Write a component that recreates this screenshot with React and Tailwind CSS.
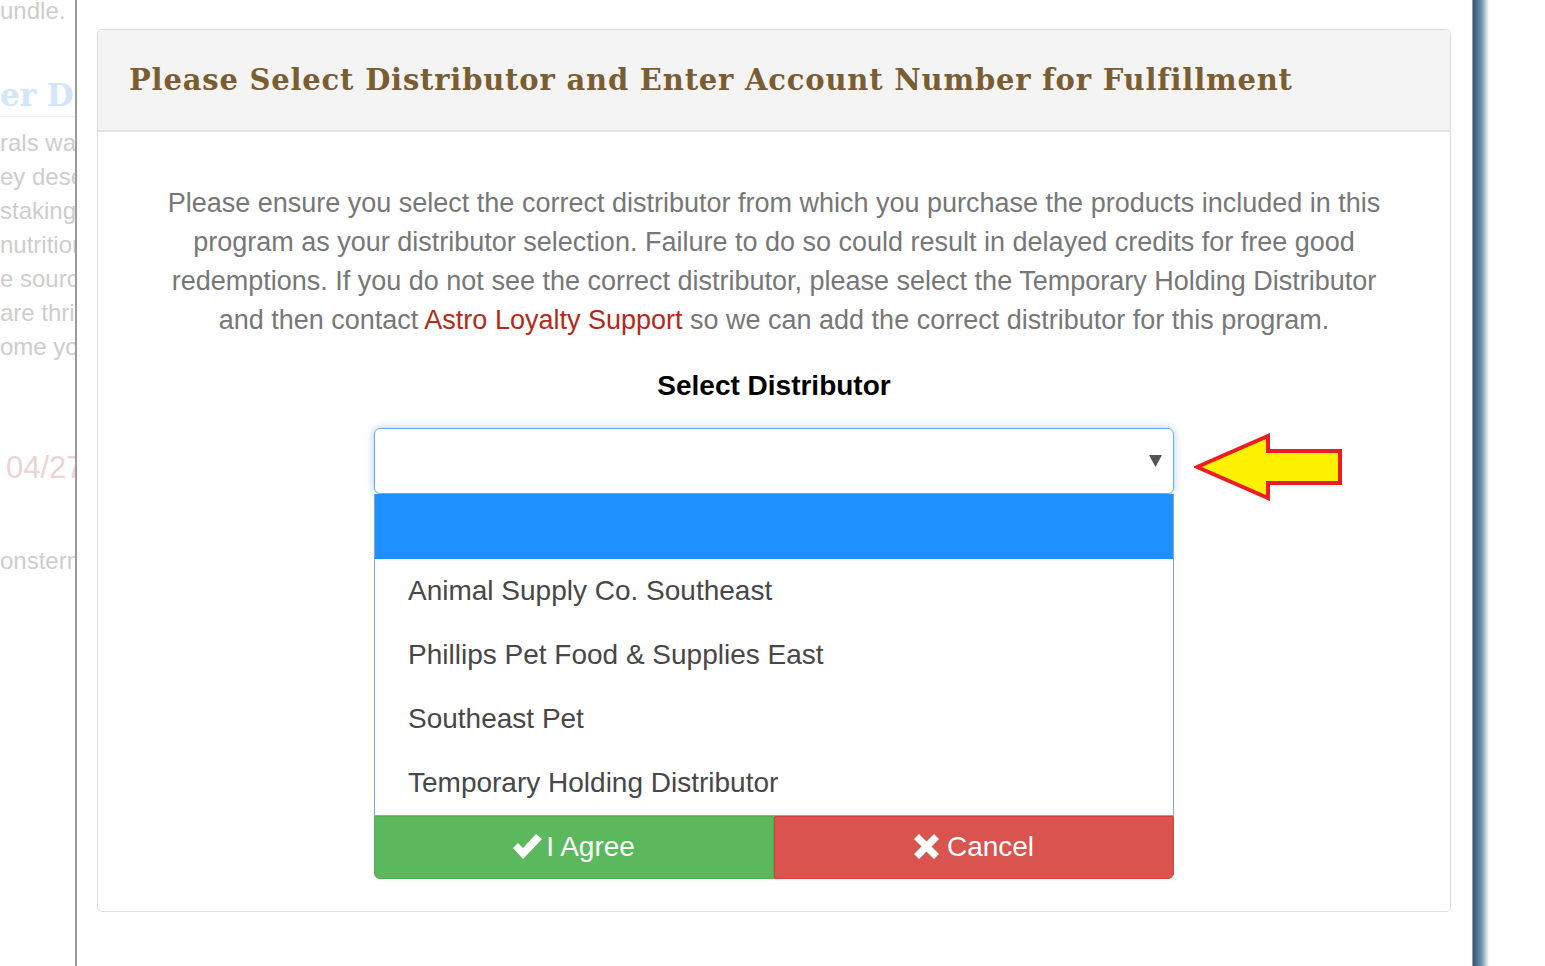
import React from "react";

const options = [
  "Animal Supply Co. Southeast",
  "Phillips Pet Food & Supplies East",
  "Southeast Pet",
  "Temporary Holding Distributor",
];

const bgLines = ["rals wa", "ey dese", "staking", "nutrition", "e sourc", "are thri", "ome yo"];

const CheckIcon = () => (
  <svg width="29" height="25" viewBox="0 0 29 25" className="mr-1">
    <path d="M0 14 L5 9 L10 14 L23 0 L29 5 L10 25 Z" fill="#fff" />
  </svg>
);

const RemoveIcon = () => (
  <svg width="25" height="25" viewBox="0 0 25 25" className="mr-2">
    <path
      d="M0 5 L5 0 L12.5 7.5 L20 0 L25 5 L17.5 12.5 L25 20 L20 25 L12.5 17.5 L5 25 L0 20 L7.5 12.5 Z"
      fill="#fff"
    />
  </svg>
);

const Arrow = () => (
  <svg width="150" height="68" viewBox="0 0 150 68">
    <path
      d="M3 34 L74 3 L74 18 L146 18 L146 50 L74 50 L74 65 Z"
      fill="#fff200"
      stroke="#ed1c24"
      strokeWidth="4"
      strokeLinejoin="miter"
    />
  </svg>
);

const App = () => {
  return (
    <div
      className="flex w-[1545px] h-[966px] overflow-hidden bg-white"
      style={{ fontFamily: '"Liberation Sans", Arial, sans-serif' }}
    >
      {/* faded page behind the modal */}
      <div className="w-[75px] shrink-0 overflow-hidden whitespace-nowrap text-[#cdcdcd] text-[24px]">
        <div className="h-[22px] leading-[22px]">undle.</div>
        <div
          className="mt-[58px] h-[30px] leading-[30px] text-[31px] font-bold text-[#d3e5f8]"
          style={{ fontFamily: '"DejaVu Serif", serif' }}
        >
          er D
        </div>
        <div className="mt-[6px] h-px bg-[#efefef]" />
        <div className="pt-[9px]">
          {bgLines.map((l) => (
            <div key={l} className="h-[34px] leading-[34px]">
              {l}
            </div>
          ))}
        </div>
        <div className="mt-[87px] text-[31px] leading-[34px] text-[#ecd4d4] pl-[6px]">04/27</div>
        <div className="mt-[62px] text-[24px] leading-[28px]">onsterna</div>
      </div>
      <div className="w-[2px] shrink-0 bg-[#9a9a9a]" />

      {/* modal */}
      <div className="w-[1395px] shrink-0 pt-[29px] pl-[20px] pr-[21px]">
        <div className="border border-[#dddddd] rounded-[5px] h-[883px]">
          <div className="h-[102px] bg-[#f4f4f4] border-b-2 border-[#e3e3e3] rounded-t-[5px] pl-[31px] flex items-center pt-[2px]">
            <h2
              className="text-[29px] font-bold text-[#7b5d32] tracking-[0.8px]"
              style={{ fontFamily: '"DejaVu Serif", serif' }}
            >
              Please Select Distributor and Enter Account Number for Fulfillment
            </h2>
          </div>

          <div className="pt-[52px] px-[51px]">
            <p className="text-center text-[27px] leading-[39px] text-[#777777]">
              Please ensure you select the correct distributor from which you purchase the products included in this
              program as your distributor selection. Failure to do so could result in delayed credits for free good
              redemptions. If you do not see the correct distributor, please select the Temporary Holding Distributor
              and then contact <span className="text-[#b5291a]">Astro Loyalty Support</span> so we can add the correct
              distributor for this program.
            </p>

            <div className="mt-[30px] text-center text-[28px] leading-[32px] font-bold text-black">
              Select Distributor
            </div>

            <div className="mt-[26px] mx-auto w-[800px] relative">
              <div className="h-[66px] border border-[#66afe9] rounded-[6px] shadow-[0_0_8px_rgba(102,175,233,0.6)] flex items-center justify-end pr-[11px]">
                <svg width="13" height="12" viewBox="0 0 13 12">
                  <path d="M0 0 L13 0 L6.5 12 Z" fill="#555" />
                </svg>
              </div>
              <div className="absolute left-[calc(100%+20px)] top-[5px]">
                <Arrow />
              </div>

              {/* fields beneath the open list */}
              <div className="h-[322px] pt-[65px]">
                <div className="h-[80px] border-x border-[#bbbbbb]" />
              </div>

              {/* open option list */}
              <ul className="absolute left-0 right-0 top-[66px] bg-white border-x border-b border-[#7ea7df]">
                <li className="h-[65px] bg-[#1e90ff]" />
                {options.map((o) => (
                  <li
                    key={o}
                    className="h-[64px] flex items-center pl-[33px] text-[28px] text-[#474747]"
                  >
                    {o}
                  </li>
                ))}
              </ul>

              <div className="flex h-[63px]">
                <button className="w-1/2 flex items-center justify-center bg-[#5cb85c] border border-[#4cae4c] rounded-bl-[6px] text-white text-[28px] pb-[2px]">
                  <CheckIcon />
                  I Agree
                </button>
                <button className="w-1/2 flex items-center justify-center bg-[#d9534f] border border-[#d43f3a] rounded-br-[6px] text-white text-[28px] pb-[2px]">
                  <RemoveIcon />
                  Cancel
                </button>
              </div>
            </div>
          </div>
        </div>
      </div>

      {/* page edge behind */}
      <div className="w-px shrink-0 bg-[#9a9a9a]" />
      <div className="w-[16px] shrink-0 bg-gradient-to-r from-[#2d5878] via-[#6b8ea8] to-white" />
      <div className="flex-1 bg-white" />
    </div>
  );
};

export default App;
